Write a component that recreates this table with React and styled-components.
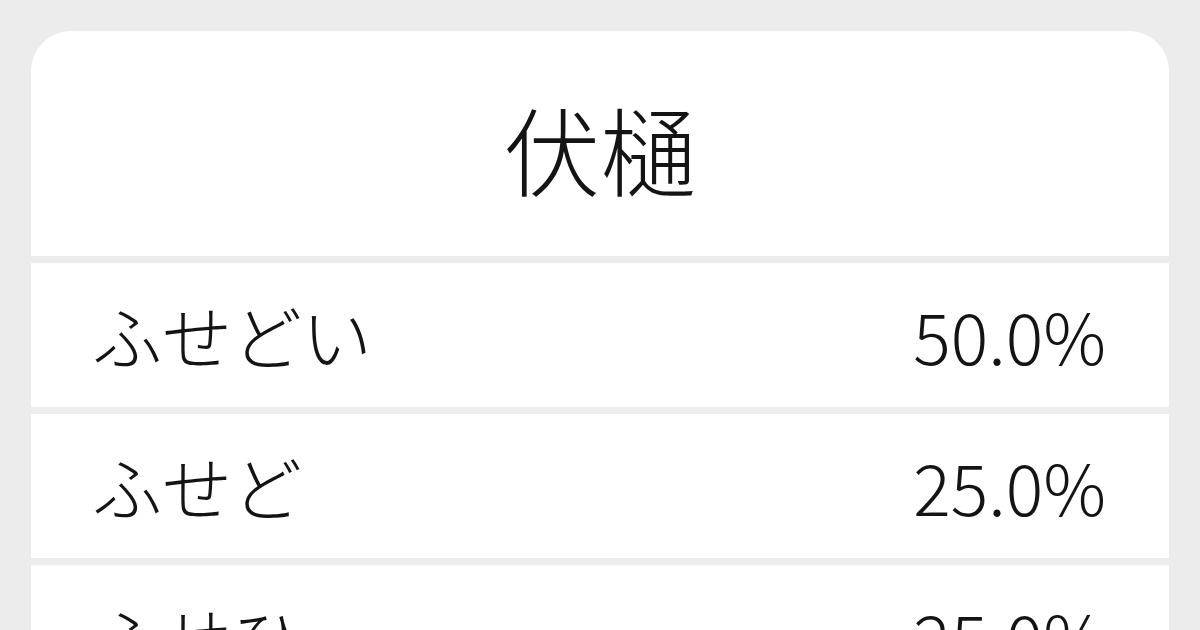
import React from "react";
import styled, { createGlobalStyle } from "styled-components";

const Global = createGlobalStyle`
  html, body { margin: 0; padding: 0; background: #ececec; }
  body { font-family: "Noto Sans CJK JP", "Noto Sans", sans-serif; color: #141414; }
`;

const Page = styled.div`
  width: 1200px;
  height: 630px;
  box-sizing: border-box;
  padding: 31px 31px 0;
  overflow: hidden;
`;

const Card = styled.div`
  display: flex;
  flex-direction: column;
  gap: 7px;
  border-radius: 40px 40px 0 0;
  overflow: hidden;
`;

const Header = styled.div`
  height: 225px;
  background: #fff;
  display: flex;
  align-items: center;
  justify-content: center;
`;

const Title = styled.h1`
  margin: 0;
  font-size: 96px;
  font-weight: 300;
  line-height: 1;
  padding-top: 8px;
`;

const Row = styled.div`
  height: 144px;
  flex-shrink: 0;
  background: #fff;
  display: flex;
  align-items: center;
  justify-content: space-between;
  padding: 0 63px 0 61px;
`;

const Text = styled.span`
  font-size: 70px;
  font-weight: 300;
  line-height: 1;
`;

const rows = [
  ["ふせどい", "50.0%"],
  ["ふせど", "25.0%"],
  ["ふせひ", "25.0%"],
];

export default function App() {
  return (
    <Page>
      <Global />
      <Card>
        <Header>
          <Title>伏樋</Title>
        </Header>
        {rows.map(([r, p]) => (
          <Row key={r}>
            <Text>{r}</Text>
            <Text>{p}</Text>
          </Row>
        ))}
      </Card>
    </Page>
  );
}
